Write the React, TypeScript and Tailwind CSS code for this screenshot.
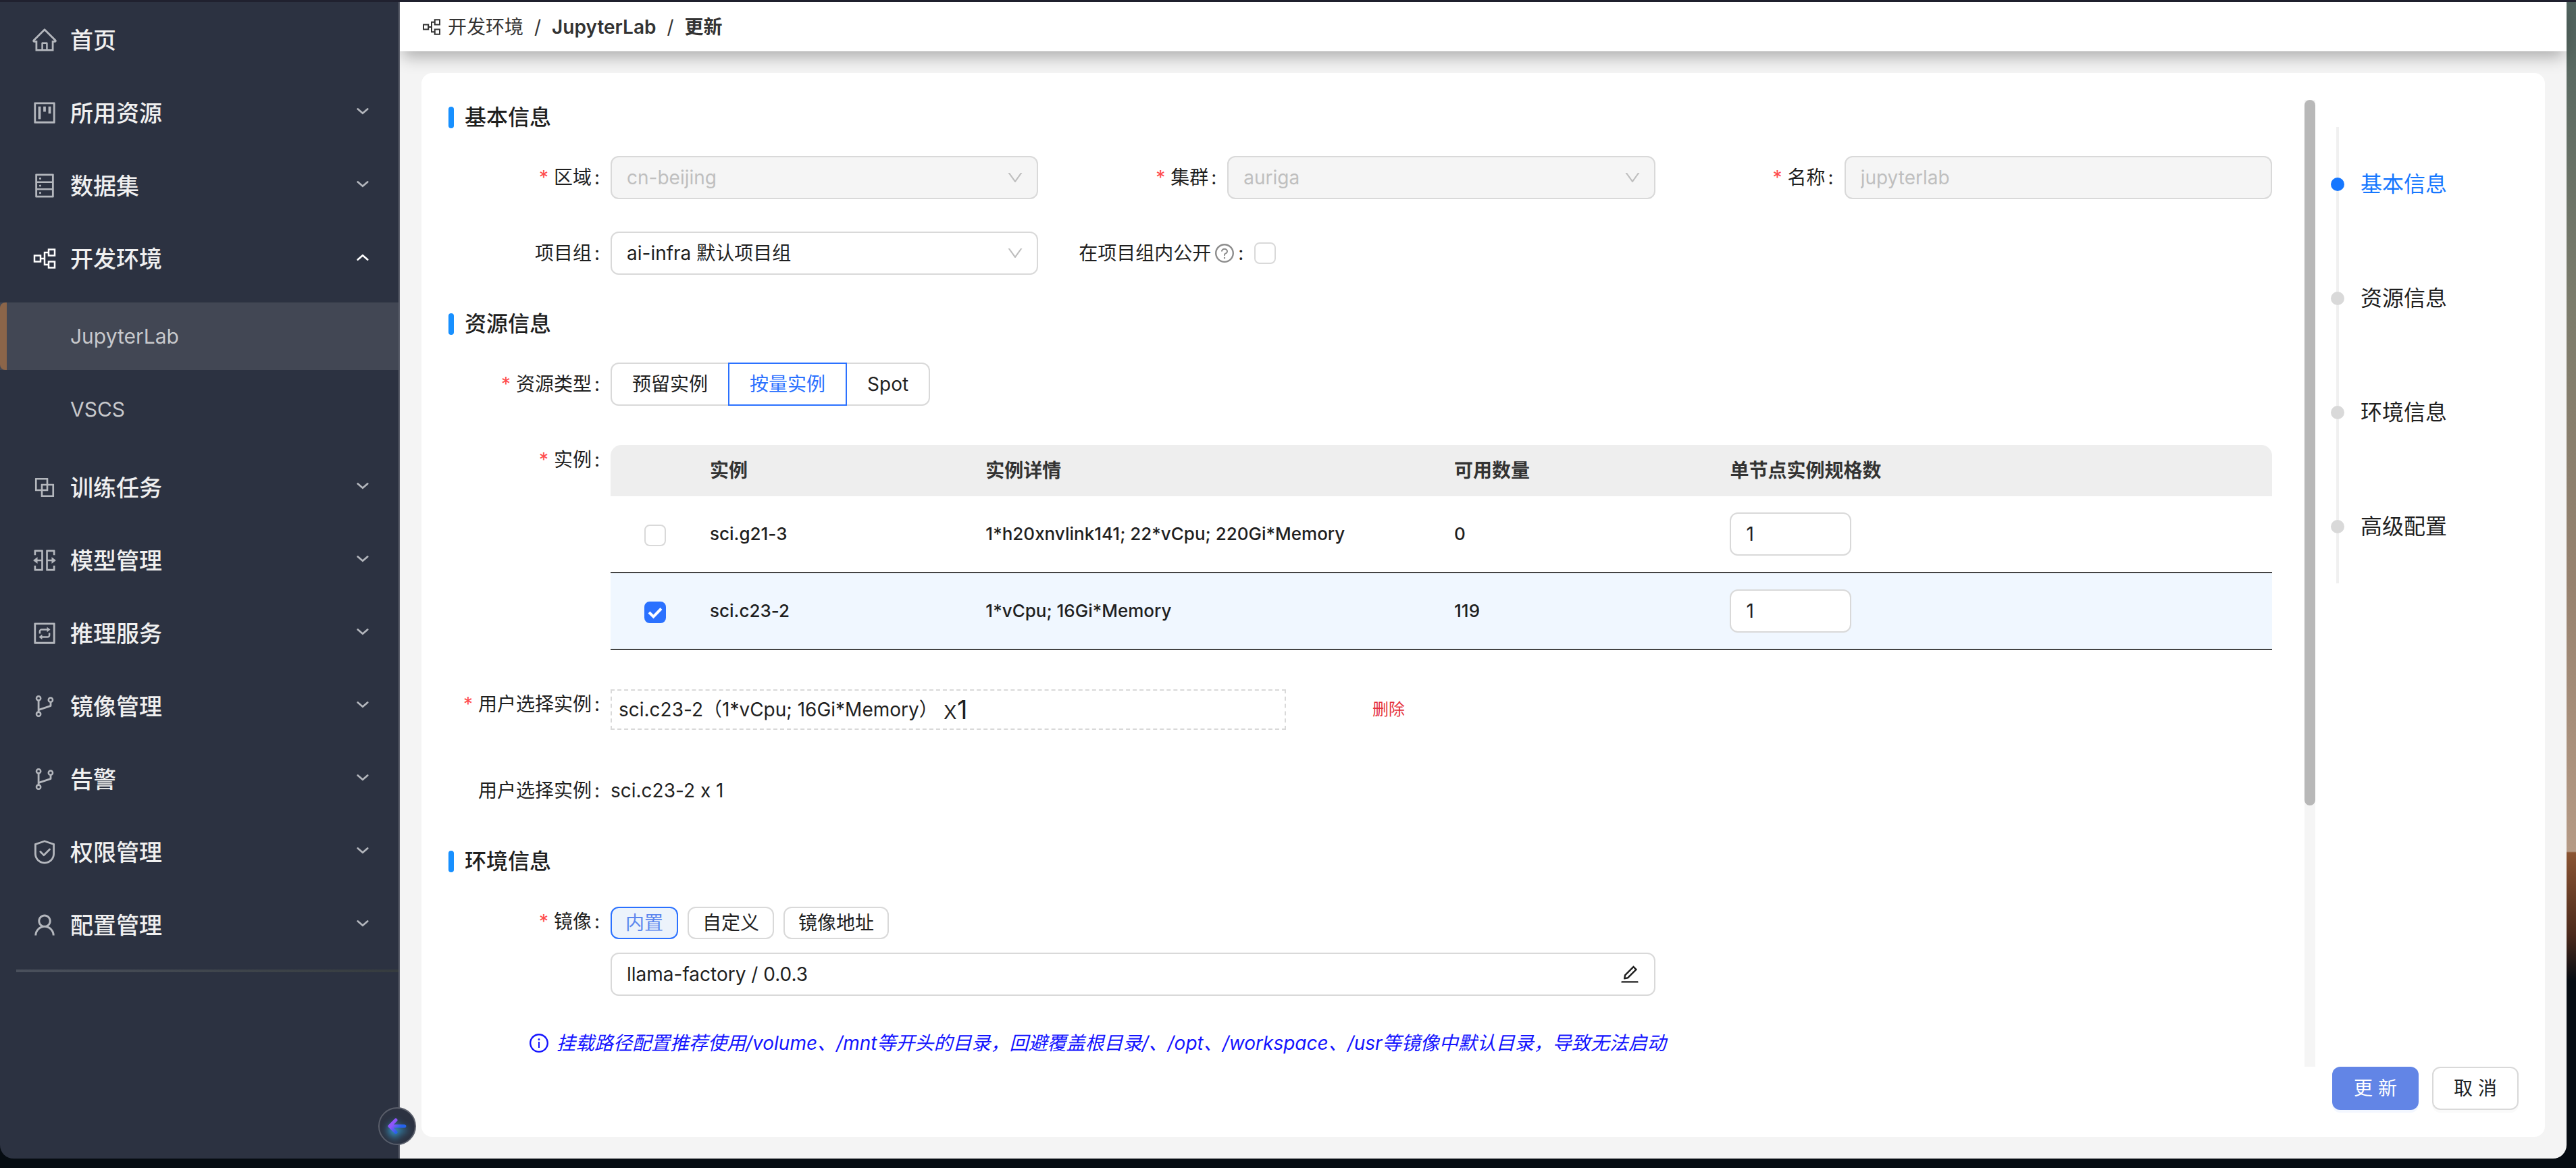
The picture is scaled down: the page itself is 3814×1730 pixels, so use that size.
import { useState } from "react";
import {
    AiOutlineBlock,
    AiOutlineBranches,
    AiOutlineDatabase,
    AiOutlineDown,
    AiOutlineEdit,
    AiOutlineHome,
    AiOutlineInfoCircle,
    AiOutlineInteraction,
    AiOutlineProject,
    AiOutlineQuestionCircle,
    AiOutlineSafety,
    AiOutlineSplitCells,
    AiOutlineUser,
} from "react-icons/ai";

const TreeIcon = ({ className }: any) => (
    <svg viewBox="0 0 40 40" className={className} fill="none" stroke="currentColor" strokeWidth="2.5">
        <path d="M5 15.5h9v9h-9zM26 6.5h9v9h-9zM26 24.5h9v9h-9zM14 20h6M26 11h-6v18h6" />
    </svg>
);

const menu = [
    { label: "首页", icon: AiOutlineHome, leaf: true },
    { label: "所用资源", icon: AiOutlineProject },
    { label: "数据集", icon: AiOutlineDatabase },
    { label: "开发环境", icon: TreeIcon, children: ["JupyterLab", "VSCS"] },
    { label: "训练任务", icon: AiOutlineBlock },
    { label: "模型管理", icon: AiOutlineSplitCells },
    { label: "推理服务", icon: AiOutlineInteraction },
    { label: "镜像管理", icon: AiOutlineBranches },
    { label: "告警", icon: AiOutlineBranches },
    { label: "权限管理", icon: AiOutlineSafety },
    { label: "配置管理", icon: AiOutlineUser },
];

const instances = [
    { name: "sci.g21-3", detail: "1*h20xnvlink141; 22*vCpu; 220Gi*Memory", free: 0 },
    { name: "sci.c23-2", detail: "1*vCpu; 16Gi*Memory", free: 119 },
];

const anchors = ["基本信息", "资源信息", "环境信息", "高级配置"];

const Chevron = ({ up }: any) => (
    <svg viewBox="0 0 20 12" className={`w-[18px] h-3 ml-auto mb-1 ${up ? "text-white" : "text-[#b4b7bd]"}`} fill="none" stroke="currentColor" strokeWidth="3" strokeLinecap="round">
        <path d={up ? "M2 10L10 3L18 10" : "M2 2L10 9L18 2"} />
    </svg>
);

const SideMenu = () => (
    <nav className="relative w-[592px] shrink-0 bg-[#2c3241] border-r-2 border-[#5a5e6a] rounded-bl-[20px] pt-[6px]">
        <ul className="flex flex-col gap-2">
            {menu.map((item) => (
                <li key={item.label}>
                    <a href="#" className="h-[100px] pl-[46px] pr-[44px] flex items-center">
                        <item.icon className={`w-10 h-10 mr-[18px] ${item.children ? "text-white" : "text-[#b4b7bd]"}`} />
                        <span className="text-[34px] font-medium text-[#f0f0f0]">{item.label}</span>
                        {!item.leaf && <Chevron up={!!item.children} />}
                    </a>
                    {item.children && (
                        <ul className="flex flex-col gap-2 pt-[15px] pb-2">
                            {item.children.map((sub, i) => (
                                <li key={sub}>
                                    <a href="#" className={`relative h-[100px] pl-[104px] flex items-center text-[30px] text-[#c8c9cc] ${i === 0 ? "bg-[#424754]" : ""}`}>
                                        {i === 0 && <span className="absolute left-0 inset-y-0 w-[10px] rounded-l-lg bg-[#8b6549]"></span>}
                                        {sub}
                                    </a>
                                </li>
                            ))}
                        </ul>
                    )}
                </li>
            ))}
        </ul>
        <div className="h-1 ml-6 mt-4 bg-linear-to-r from-[#4a505c] to-[#363c3f]"></div>
        <button aria-label="收起菜单" className="absolute z-20 -right-[26px] bottom-5 w-14 h-14 rounded-full bg-[#2c3241] border-2 border-[#5a5e6a] flex items-center justify-center">
            <svg viewBox="0 0 32 32" className="w-8 h-8 drop-shadow-[0_6px_6px_#38bdf8]" fill="none" stroke="url(#arrow)" strokeWidth="5" strokeLinecap="round" strokeLinejoin="round">
                <defs>
                    <linearGradient id="arrow" x1="4" y1="6" x2="24" y2="22" gradientUnits="userSpaceOnUse">
                        <stop offset="0.35" stopColor="#9055fa" />
                        <stop offset="0.8" stopColor="#2563eb" />
                    </linearGradient>
                </defs>
                <path d="M14 7L5 16L14 25M5 16L27 16.1" />
            </svg>
        </button>
    </nav>
);

const Heading = ({ children }: any) => (
    <h2 className="h-[50px] mb-8 ml-10 flex items-center gap-4 text-[32px] font-medium text-[#1f1f1f]">
        <span className="w-2 h-8 rounded bg-[#1890ff]"></span>
        {children}
    </h2>
);

const Label = ({ text, required, htmlFor, wide, help }: any) => (
    <label htmlFor={htmlFor} className={`${wide ? "w-[320px]" : "w-[280px]"} h-16 shrink-0 pr-4 flex items-center justify-end`}>
        {required && <span className="mr-2 text-[#ff4d4f]">*</span>}
        {text}
        {help && <AiOutlineQuestionCircle className="w-8 h-8 ml-1 text-[#8c8c8c]" />}
        <span className="ml-1">:</span>
    </label>
);

const Select = ({ id, value, disabled }: any) => (
    <div className="relative flex-1">
        <select id={id} disabled={disabled} className={`w-full h-16 pl-[22px] pr-14 appearance-none border-2 border-[#d9d9d9] rounded-xl opacity-100 ${disabled ? "bg-[#f5f5f5] text-[#bfbfbf]" : "bg-white"}`}>
            <option>{value}</option>
        </select>
        <AiOutlineDown className="absolute right-5 top-[18px] w-7 h-7 text-[#bfbfbf] pointer-events-none" />
    </div>
);

const CheckBox = (props: any) => (
    <span className="relative inline-flex w-8 h-8 align-middle">
        <input type="checkbox" {...props} className="w-8 h-8 appearance-none border-2 border-[#d9d9d9] rounded-lg bg-white checked:bg-[#2b71ff] checked:border-[#2b71ff]" />
        {props.checked && (
            <svg viewBox="0 0 32 32" className="absolute inset-0 w-8 h-8 pointer-events-none" fill="none" stroke="white" strokeWidth="4">
                <path d="M7 16L13.5 22.5L25 10.5" />
            </svg>
        )}
    </span>
);

const InstanceTable = () => {
    const [selected, setSelected] = useState("sci.c23-2");
    return (
        <table className="flex-1 mt-[10px] table-fixed text-left border-separate border-spacing-0">
            <thead>
                <tr className="h-[76px] text-[#333] *:bg-[#eeeeee]">
                    <th className="w-[131px] rounded-tl-2xl"></th>
                    <th className="w-[16.6%] px-4 font-semibold">实例</th>
                    <th className="w-[28.2%] px-4 font-semibold">实例详情</th>
                    <th className="w-[16.6%] px-4 font-semibold">可用数量</th>
                    <th className="px-4 font-semibold rounded-tr-2xl">单节点实例规格数</th>
                </tr>
            </thead>
            <tbody>
                {instances.map((row) => (
                    <tr key={row.name} className={`h-[114px] text-[26px] font-medium *:border-b-2 *:border-[#434343] ${selected === row.name ? "bg-[#f0f7ff]" : ""}`}>
                        <td className="text-center">
                            <CheckBox aria-label={row.name} checked={selected === row.name} onChange={() => setSelected(row.name)} />
                        </td>
                        <td className="px-4">{row.name}</td>
                        <td className="px-4">{row.detail}</td>
                        <td className="px-4">{row.free}</td>
                        <td className="px-4">
                            <input aria-label={`${row.name} 规格数`} defaultValue="1" className="w-[180px] h-16 px-[22px] block border-2 border-[#d9d9d9] rounded-xl bg-white text-[28px] font-normal" />
                        </td>
                    </tr>
                ))}
            </tbody>
        </table>
    );
};

const EditForm = () => (
    <form className="flex-1 min-w-0 pt-px pr-12 text-[28px] leading-[44px] text-[#1f1f1f]">
        <Heading>基本信息</Heading>
        <div className="grid grid-cols-3 gap-y-12 mb-12">
            <div className="flex">
                <Label text="区域" required htmlFor="region" />
                <Select id="region" value="cn-beijing" disabled />
            </div>
            <div className="flex">
                <Label text="集群" required htmlFor="cluster" />
                <Select id="cluster" value="auriga" disabled />
            </div>
            <div className="flex">
                <Label text="名称" required htmlFor="name" />
                <input id="name" disabled defaultValue="jupyterlab" className="flex-1 min-w-0 h-16 px-[22px] border-2 border-[#d9d9d9] rounded-xl bg-[#f5f5f5] text-[#bfbfbf]" />
            </div>
            <div className="flex">
                <Label text="项目组" htmlFor="group" />
                <Select id="group" value="ai-infra 默认项目组" />
            </div>
            <div className="flex items-center">
                <Label text="在项目组内公开" htmlFor="public" wide help />
                <CheckBox id="public" />
            </div>
        </div>

        <Heading>资源信息</Heading>
        <div className="flex mb-12">
            <Label text="资源类型" required />
            <button type="button" className="h-16 px-[30px] border-2 border-r-0 border-[#d9d9d9] rounded-l-xl">预留实例</button>
            <button type="button" className="h-16 px-[30px] border-2 border-[#2b71ff] text-[#2b71ff]">按量实例</button>
            <button type="button" className="h-16 px-[30px] border-2 border-l-0 border-[#d9d9d9] rounded-r-xl">Spot</button>
        </div>
        <div className="flex mb-12">
            <Label text="实例" required />
            <InstanceTable />
        </div>
        <div className="flex mb-12">
            <Label text="用户选择实例" required />
            <div className="w-[1000px] h-[60px] my-[10px] px-[10px] flex items-center border-2 border-dashed border-[#d9d9d9]">
                sci.c23-2（1*vCpu; 16Gi*Memory）
                <span className="ml-2 text-[38px] font-light">x<span className="font-normal">1</span></span>
            </div>
            <button type="button" className="ml-32 mt-2 h-16 text-2xl text-[#e5343d]">删除</button>
        </div>
        <div className="flex items-center mb-12">
            <Label text="用户选择实例" />
            sci.c23-2 x 1
        </div>

        <Heading>环境信息</Heading>
        <div className="flex mb-12">
            <Label text="镜像" required htmlFor="image" />
            <div className="flex-1 pt-[10px]">
                <div className="flex gap-[14px] mb-5">
                    <button type="button" className="h-12 px-5 border-2 rounded-xl border-[#2b71ff] bg-[#ecf3fb] text-[#5b86ee]">内置</button>
                    <button type="button" className="h-12 px-5 border-2 rounded-xl border-[#d9d9d9]">自定义</button>
                    <button type="button" className="h-12 px-5 border-2 rounded-xl border-[#d9d9d9]">镜像地址</button>
                </div>
                <div className="relative">
                    <input id="image" defaultValue="llama-factory / 0.0.3" className="w-full h-16 px-[22px] border-2 border-[#d9d9d9] rounded-xl" />
                    <button type="button" aria-label="编辑" className="absolute right-[22px] top-4">
                        <AiOutlineEdit className="w-8 h-8" />
                    </button>
                </div>
            </div>
            <div className="w-1/3"></div>
        </div>
        <p className="ml-[158px] flex items-center gap-[10px] italic text-[#1414ff]">
            <AiOutlineInfoCircle className="w-8 h-8" />
            挂载路径配置推荐使用/volume、/mnt等开头的目录，回避覆盖根目录/、/opt、/workspace、/usr等镜像中默认目录，导致无法启动
        </p>
    </form>
);

const AnchorNav = () => (
    <aside className="w-[340px] shrink-0 flex flex-col justify-between pl-[25px] pt-10">
        <ul className="ml-[6px] border-l-4 border-[#f0f0f0]">
            {anchors.map((a, i) => (
                <li key={a} className="h-[169px] flex items-center text-[32px]">
                    <span className={`w-5 h-5 -ml-3 mr-6 rounded-full ${i === 0 ? "bg-[#1677ff]" : "bg-[#d9d9d9]"}`}></span>
                    <a href="#" className={i === 0 ? "text-[#1677ff]" : "text-[#1f1f1f]"}>{a}</a>
                </li>
            ))}
        </ul>
        <div className="flex gap-5 text-[28px]">
            <button className="w-32 h-16 rounded-xl bg-[#6285e6] text-white shadow-[0_4px_0_#f3f7ff]">更 新</button>
            <button className="w-32 h-16 rounded-xl border-2 border-[#d9d9d9] text-[#1f1f1f] shadow-[0_4px_0_#fafafa]">取 消</button>
        </div>
    </aside>
);

const App = () => {
    return (
        <div className="h-screen flex flex-col bg-[linear-gradient(to_bottom,#50645f_0%,#7c7c6c_26%,#97826f_50%,#b59a85_72.9%,#8a5433_73%,#4b2a1c_80%,#060c12_84%)] font-['Inter','Noto_Sans_CJK_SC',sans-serif] [font-feature-settings:'calt'_0]">
            <div className="h-[3px] shrink-0 bg-[#20212f]"></div>
            <div className="flex-1 min-h-0 flex mr-[14px] mb-[14px]">
                <SideMenu />
                <div className="flex-1 min-w-0 flex flex-col bg-[#f4f4f4] rounded-br-[20px]">
                    <header className="h-[73px] shrink-0 px-[31px] flex items-center bg-white text-[28px] text-[#333] shadow-[0_12px_24px_-4px_rgba(0,0,0,0.3)]">
                        <TreeIcon className="w-8 h-8 mr-2" />
                        开发环境
                        <span className="mx-4">/</span>
                        <a href="#" className="font-semibold">JupyterLab</a>
                        <span className="mx-4">/</span>
                        <span className="font-semibold">更新</span>
                    </header>
                    <main className="relative flex-1 flex m-8 py-10 bg-white rounded-2xl">
                        <EditForm />
                        <div className="w-4 mb-16 bg-[#f5f5f5]">
                            <div className="h-[73%] rounded-full bg-[#b8b8b8]"></div>
                        </div>
                        <AnchorNav />
                    </main>
                </div>
            </div>
        </div>
    );
};

export default App;
